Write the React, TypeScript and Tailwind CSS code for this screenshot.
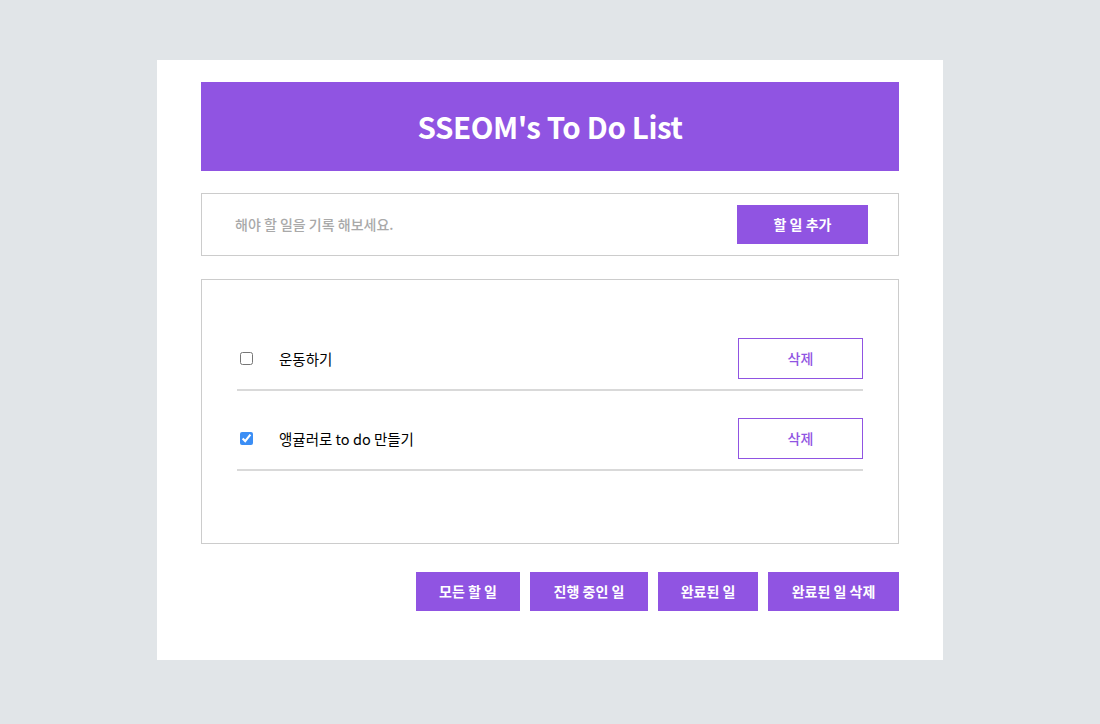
import { useState } from "react";

interface Todo {
  id: number;
  content: string;
  completed: boolean;
}

const font = { fontFamily: '"Noto Sans CJK KR", "Noto Sans", sans-serif' };

export default function App() {
  const [todos, setTodos] = useState<Todo[]>([
    { id: 1, content: "운동하기", completed: false },
    { id: 2, content: "앵귤러로 to do 만들기", completed: true },
  ]);
  const [input, setInput] = useState("");

  const toggle = (id: number) =>
    setTodos((prev) => prev.map((t) => (t.id === id ? { ...t, completed: !t.completed } : t)));

  const remove = (id: number) => setTodos((prev) => prev.filter((t) => t.id !== id));

  return (
    <div className="min-h-screen w-full bg-[#e1e5e8] pt-[60px]" style={font}>
      <div className="mx-auto w-[786px] bg-white px-[44px] pt-[22px] pb-[49px]">
        {/* Header */}
        <div className="flex h-[89px] items-center justify-center bg-[#9054e2]">
          <h1 className="text-[29.5px] font-bold tracking-[-0.4px] text-white">SSEOM's To Do List</h1>
        </div>

        {/* Input */}
        <form
          onSubmit={(e) => {
            e.preventDefault();
            if (!input) return;
            setTodos((prev) => [...prev, { id: Date.now(), content: input, completed: false }]);
            setInput("");
          }}
          className="mt-[22px] flex h-[63px] items-center border border-[#cccccc] pl-[33px] pr-[30px]"
        >
          <input
            type="text"
            value={input}
            onChange={(e) => setInput(e.target.value)}
            placeholder="해야 할 일을 기록 해보세요."
            className="flex-grow text-[14px] font-medium text-[#555] outline-none placeholder:text-[#a9a9a9]"
          />
          <button
            type="submit"
            className="h-[39px] w-[131px] bg-[#9054e2] text-[14px] font-bold text-white"
          >
            할 일 추가
          </button>
        </form>

        {/* List */}
        <ul className="mt-[23px] h-[265px] border border-[#cccccc] px-[35px] pt-[31px]">
          {todos.map((todo) => (
            <li
              key={todo.id}
              className="flex items-center border-b-2 border-[#d9d9d9] pt-[27px] pb-[10px]"
            >
              <input
                type="checkbox"
                checked={todo.completed}
                onChange={() => toggle(todo.id)}
                className="ml-[3px] h-[13px] w-[13px] accent-[#3b8ef5]"
              />
              <span className="ml-[26px] flex-grow text-[14.5px] text-black">{todo.content}</span>
              <button
                onClick={() => remove(todo.id)}
                className="h-[41px] w-[125px] border border-[#9054e2] text-[14px] font-medium text-[#9054e2]"
              >
                삭제
              </button>
            </li>
          ))}
        </ul>

        {/* Filters */}
        <div className="mt-[28px] flex justify-end gap-[10px]">
          {[
            ["모든 할 일", "w-[104px]"],
            ["진행 중인 일", "w-[118px]"],
            ["완료된 일", "w-[100px]"],
            ["완료된 일 삭제", "w-[131px]"],
          ].map(([label, w]) => (
            <button
              key={label}
              onClick={() => label === "완료된 일 삭제" && setTodos((prev) => prev.filter((t) => !t.completed))}
              className={`h-[39px] ${w} bg-[#9054e2] text-[14px] font-bold text-white`}
            >
              {label}
            </button>
          ))}
        </div>
      </div>
    </div>
  );
}
